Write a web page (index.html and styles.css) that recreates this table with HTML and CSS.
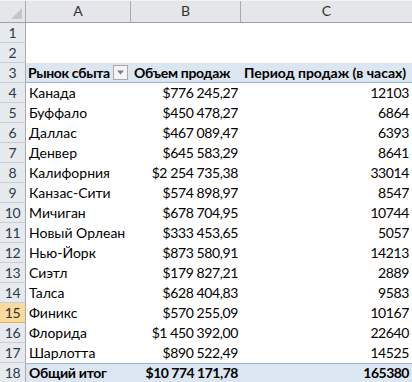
FILE: index.html
```html
<!DOCTYPE html>
<html lang="ru">
<head>
<meta charset="utf-8">
<link rel="stylesheet" href="styles.css">
</head>
<body>
<div class="sheet">
  <div class="corner"><span class="tri"></span></div>
  <div class="colhead">A</div>
  <div class="colhead">B</div>
  <div class="colhead last">C</div>

  <div class="rh">1</div><div class="c"></div><div class="c"></div><div class="c"></div>
  <div class="rh">2</div><div class="c"></div><div class="c"></div><div class="c"></div>

  <div class="rh">3</div>
  <div class="c ph first">Рынок сбыта<span class="filter"><svg width="9" height="5" viewBox="0 0 9 5"><path d="M1 0.5h7L4.5 4.5z" fill="#7f7f7f"/></svg></span></div>
  <div class="c ph">Объем продаж</div>
  <div class="c ph wide">Период продаж (в часах)</div>

  <div class="rh">4</div><div class="c">Канада</div><div class="c r">$776 245,27</div><div class="c r">12103</div>
  <div class="rh">5</div><div class="c">Буффало</div><div class="c r">$450 478,27</div><div class="c r">6864</div>
  <div class="rh">6</div><div class="c">Даллас</div><div class="c r">$467 089,47</div><div class="c r">6393</div>
  <div class="rh">7</div><div class="c">Денвер</div><div class="c r">$645 583,29</div><div class="c r">8641</div>
  <div class="rh">8</div><div class="c">Калифорния</div><div class="c r">$2 254 735,38</div><div class="c r">33014</div>
  <div class="rh">9</div><div class="c">Канзас-Сити</div><div class="c r">$574 898,97</div><div class="c r">8547</div>
  <div class="rh">10</div><div class="c">Мичиган</div><div class="c r">$678 704,95</div><div class="c r">10744</div>
  <div class="rh">11</div><div class="c">Новый Орлеан</div><div class="c r">$333 453,65</div><div class="c r">5057</div>
  <div class="rh">12</div><div class="c">Нью-Йорк</div><div class="c r">$873 580,91</div><div class="c r">14213</div>
  <div class="rh">13</div><div class="c">Сиэтл</div><div class="c r">$179 827,21</div><div class="c r">2889</div>
  <div class="rh">14</div><div class="c">Талса</div><div class="c r">$628 404,83</div><div class="c r">9583</div>
  <div class="rh sel">15</div><div class="c">Финикс</div><div class="c r">$570 255,09</div><div class="c r">10167</div>
  <div class="rh">16</div><div class="c">Флорида</div><div class="c r">$1 450 392,00</div><div class="c r">22640</div>
  <div class="rh">17</div><div class="c">Шарлотта</div><div class="c r">$890 522,49</div><div class="c r">14525</div>

  <div class="rh">18</div>
  <div class="c tot">Общий итог</div>
  <div class="c tot r">$10 774 171,78</div>
  <div class="c tot r">165380</div>
</div>
</body>
</html>
```

FILE: styles.css
```css
html, body {
  margin: 0;
  padding: 0;
  background: #ffffff;
}
body {
  font-family: Lato, "Liberation Sans", sans-serif;
  font-size: 14px;
  color: #000;
}
.sheet {
  display: grid;
  grid-template-columns: 26px 105px 110px 171px;
  grid-template-rows: 22px repeat(18, 20px);
  width: 412px;
  border-top: 1px solid #f3f3f3;
  box-sizing: border-box;
}
.corner {
  position: relative;
  background: #e4e6e9;
  border-right: 1px solid #a6a9ad;
  border-bottom: 1px solid #9da1a6;
  box-sizing: border-box;
}
.corner .tri {
  position: absolute;
  right: 3px;
  bottom: 3px;
  width: 0;
  height: 0;
  border-left: 11px solid transparent;
  border-bottom: 11px solid #c3c6ca;
}
.colhead {
  background: #e4e6e9;
  border-right: 1px solid #a6a9ad;
  border-bottom: 1px solid #9da1a6;
  box-sizing: border-box;
  text-align: center;
  line-height: 20px;
  color: #2f3338;
  font-size: 14px;
}
.colhead.last { border-right: none; }
.rh {
  background: #e6e9ed;
  border-right: 1px solid #a6a9ad;
  border-bottom: 1px solid #c9cdd2;
  box-sizing: border-box;
  text-align: center;
  line-height: 20px;
  color: #2b3a4c;
  letter-spacing: -0.3px;
}
.rh.sel {
  background: #f9d99e;
  border-bottom-color: #e1b262;
  color: #3a3020;
}
.c {
  line-height: 20px;
  padding: 0 3px;
  white-space: nowrap;
  overflow: hidden;
  box-sizing: border-box;
}
.c.r {
  text-align: right;
  letter-spacing: -0.4px;
}
.ph {
  background: #dce6f1;
  border-bottom: 1px solid #95b3d7;
  font-weight: bold;
  display: flex;
  align-items: center;
  line-height: 19px;
  letter-spacing: -0.3px;
}
.ph.first {
  padding-left: 2px;
  letter-spacing: -0.35px;
}
.ph.wide { letter-spacing: 0; }
.filter {
  margin-left: auto;
  width: 13px;
  height: 13px;
  border: 1px solid #a9a9a9;
  background: #f4f4f4;
  display: flex;
  align-items: center;
  justify-content: center;
}
.tot {
  background: #dce6f1;
  border-top: 1px solid #95b3d7;
  font-weight: bold;
  line-height: 18px;
  letter-spacing: -0.3px;
}
.tot.r { letter-spacing: -0.5px; }
```
